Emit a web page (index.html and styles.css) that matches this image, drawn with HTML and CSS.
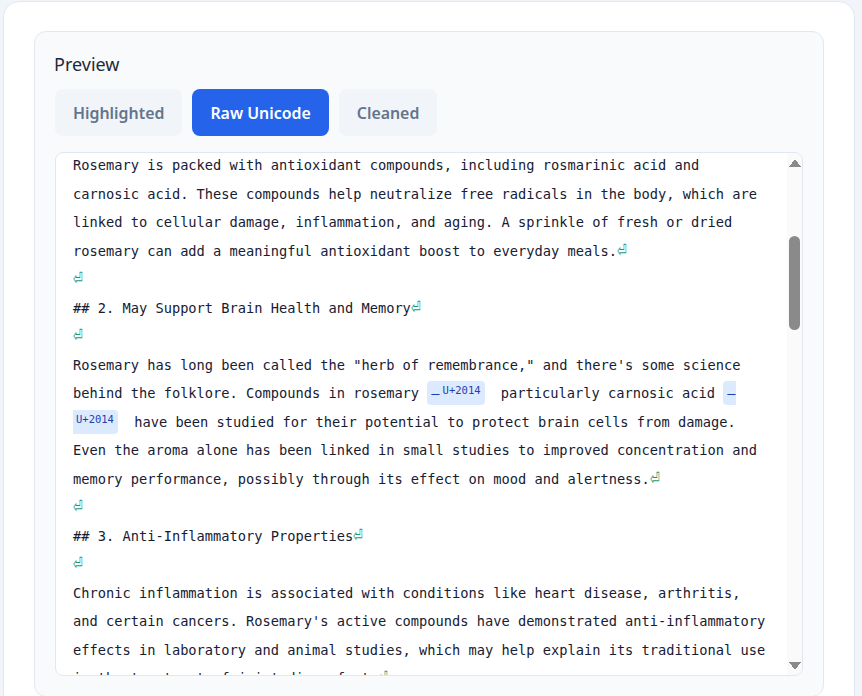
FILE: index.html
```html
<!DOCTYPE html>
<html lang="en">
<head>
<meta charset="utf-8">
<title>Preview</title>
<link rel="stylesheet" href="styles.css">
</head>
<body>
<div class="card">
  <section class="panel">
    <h2 class="panel-title">Preview</h2>
    <div class="tabs">
      <button class="tab">Highlighted</button>
      <button class="tab active">Raw Unicode</button>
      <button class="tab">Cleaned</button>
    </div>
    <div class="raw-wrap">
    <div class="raw" id="raw">
<div class="ln"># 7 Science-Backed Health Benefits of Rosemary<span class="nl">⏎</span></div>
<div class="ln"><span class="nl">⏎</span></div>
<div class="ln">Rosemary (Salvia rosmarinus) is a fragrant evergreen herb native to the Mediterranean region. Beyond its culinary uses, it has been valued for centuries in traditional medicine, and modern research is beginning to confirm many of its benefits.<span class="nl">⏎</span></div>
<div class="ln"><span class="nl">⏎</span></div>
<div class="ln">Whether you use it fresh, dried, or as an essential oil, rosemary offers a range of potential health benefits backed by a growing body of research.<span class="nl">⏎</span></div>
<div class="ln"><span class="nl">⏎</span></div>
<div class="ln">Here's a closer look at what the science says about this remarkable herb.<span class="nl">⏎</span></div>
<div class="ln"><span class="nl">⏎</span></div>
<div class="ln">## 1. Rich in Antioxidants<span class="nl">⏎</span></div>
<div class="ln"><span class="nl">⏎</span></div>
<div class="ln" id="mark">Rosemary is packed with antioxidant compounds, including rosmarinic acid and carnosic acid. These compounds help neutralize free radicals in the body, which are linked to cellular damage, inflammation, and aging. A sprinkle of fresh or dried rosemary can add a meaningful antioxidant boost to everyday meals.<span class="nl">⏎</span></div>
<div class="ln"><span class="nl">⏎</span></div>
<div class="ln">## 2. May Support Brain Health and Memory<span class="nl">⏎</span></div>
<div class="ln"><span class="nl">⏎</span></div>
<div class="ln">Rosemary has long been called the "herb of remembrance," and there's some science behind the folklore. Compounds in rosemary <span class="ch"><span class="ch-glyph">—</span><sup class="ch-code">U+2014</sup></span> particularly carnosic acid <span class="ch"><span class="ch-glyph">—</span><sup class="ch-code">U+2014</sup></span> have been studied for their potential to protect brain cells from damage. Even the aroma alone has been linked in small studies to improved concentration and memory performance, possibly through its effect on mood and alertness.<span class="nl">⏎</span></div>
<div class="ln"><span class="nl">⏎</span></div>
<div class="ln">## 3. Anti-Inflammatory Properties<span class="nl">⏎</span></div>
<div class="ln"><span class="nl">⏎</span></div>
<div class="ln">Chronic inflammation is associated with conditions like heart disease, arthritis, and certain cancers. Rosemary's active compounds have demonstrated anti-inflammatory effects in laboratory and animal studies, which may help explain its traditional use in the treatment of joint discomfort.<span class="nl">⏎</span></div>
<div class="ln"><span class="nl">⏎</span></div>
<div class="ln">## 4. May Aid Digestion<span class="nl">⏎</span></div>
<div class="ln"><span class="nl">⏎</span></div>
<div class="ln">In traditional herbal medicine, rosemary has been used to relieve indigestion, bloating, and mild stomach upset. Some research suggests that rosemary extract may support healthy gut bacteria and stimulate the production of bile, which plays an important role in breaking down dietary fats.<span class="nl">⏎</span></div>
<div class="ln"><span class="nl">⏎</span></div>
<div class="ln">## 5. Could Promote Hair Growth<span class="nl">⏎</span></div>
<div class="ln"><span class="nl">⏎</span></div>
<div class="ln">Rosemary oil has become a popular natural remedy for thinning hair. One small study found that rosemary oil applied to the scalp performed comparably to a common hair-loss treatment after six months, with less scalp itching reported. More research is needed, but early results are promising.<span class="nl">⏎</span></div>
<div class="ln"><span class="nl">⏎</span></div>
<div class="ln">## 6. May Help Regulate Blood Sugar<span class="nl">⏎</span></div>
<div class="ln"><span class="nl">⏎</span></div>
<div class="ln">Animal and test-tube studies indicate that compounds in rosemary may help improve insulin sensitivity and lower blood sugar levels. While human studies are limited, these findings suggest rosemary could be a helpful addition to a balanced diet for people managing blood sugar.<span class="nl">⏎</span></div>
<div class="ln"><span class="nl">⏎</span></div>
<div class="ln">## 7. Supports Mood and Stress Relief<span class="nl">⏎</span></div>
<div class="ln"><span class="nl">⏎</span></div>
<div class="ln">Inhaling rosemary essential oil has been associated with lower levels of cortisol, the body's primary stress hormone. Many people find its fresh, woody aroma uplifting, which is one reason it is often used in aromatherapy blends designed to ease tension and fatigue.<span class="nl">⏎</span></div>
<div class="ln"><span class="nl">⏎</span></div>
<div class="ln">## Safety and Precautions<span class="nl">⏎</span></div>
<div class="ln"><span class="nl">⏎</span></div>
<div class="ln">Rosemary is considered safe when used in typical culinary amounts. However, large doses of rosemary extract or essential oil may cause side effects such as vomiting or skin irritation. Talk to a healthcare provider before using concentrated rosemary supplements.<span class="nl">⏎</span></div>
<div class="ln"><span class="nl">⏎</span></div>
<div class="ln">## The Bottom Line<span class="nl">⏎</span></div>
<div class="ln"><span class="nl">⏎</span></div>
<div class="ln">Rosemary is far more than a flavorful kitchen herb. From its rich supply of antioxidants to its potential benefits for memory, digestion, hair, and mood, this humble plant has a lot to offer.<span class="nl">⏎</span></div>
    </div>
    <div class="scrollbar" aria-hidden="true">
      <span class="sb-btn sb-up"></span>
      <span class="sb-track"><span class="sb-thumb"></span></span>
      <span class="sb-btn sb-down"></span>
    </div>
    </div>
  </section>
</div>
<script src="script.js"></script>
</body>
</html>
```

FILE: styles.css
```css
* { box-sizing: border-box; }

html, body {
  margin: 0;
  padding: 0;
  background: #f1f5f9;
  font-family: "Noto Sans", "Open Sans", sans-serif;
  color: #1e293b;
}

body {
  height: 696px;
  overflow: hidden;
}

.card {
  margin: 1px 7px 0 3px;
  padding: 29px 30px 30px;
  background: #ffffff;
  border: 1px solid #e2e8f0;
  border-radius: 16px;
}

.panel {
  padding: 20px;
  background: #f8fafc;
  border: 1px solid #e2e8f0;
  border-radius: 12px;
}

.panel-title {
  margin: 0 0 13px -1px;
  font-size: 18px;
  line-height: 24px;
  font-weight: 400;
  color: #1e293b;
}

.tabs {
  display: flex;
  gap: 10px;
  margin-bottom: 16px;
}

.tab {
  padding: 13px 18px 11px;
  border: 0;
  border-radius: 8px;
  background: #f1f5f9;
  color: #64748b;
  font-family: "Noto Sans", "Open Sans", sans-serif;
  font-size: 15.9px;
  line-height: 23px;
  font-weight: 600;
}

.tab.active {
  background: #2563eb;
  color: #ffffff;
}

.raw-wrap {
  position: relative;
}

.raw {
  height: 524px;
  padding: 16px 32px 16px 17px;
  background: #ffffff;
  border: 1px solid #e2e8f0;
  border-radius: 8px;
  overflow: hidden;
  font-family: "DejaVu Sans Mono", "Liberation Mono", monospace;
  font-size: 13.7px;
  line-height: 28.5px;
  color: #172033;
}

.ln {
  white-space: pre-wrap;
  overflow-wrap: break-word;
}

.nl {
  display: inline-block;
  font-family: "DejaVu Sans", sans-serif;
  font-size: 17px;
  line-height: 1;
  color: #1a9873;
  transform: translateY(1px) scale(0.7, 1.08);
  transform-origin: 0 80%;
}

.ch {
  padding: 4px 4px;
  margin-right: 8px;
  background: #dbeafe;
  border-radius: 4px;
  color: #1e40af;
}

.ch-code {
  margin-left: 3px;
  font-size: 10.5px;
  line-height: 1;
  vertical-align: 4px;
  color: #1e40af;
}

/* drawn scrollbar overlaying the right edge of the text box */
.scrollbar {
  position: absolute;
  top: 1px;
  right: 1px;
  bottom: 1px;
  width: 15px;
  display: flex;
  flex-direction: column;
  background: #fafafa;
  border-radius: 0 7px 7px 0;
}

.sb-btn {
  display: block;
  height: 17px;
  flex: none;
  background-repeat: no-repeat;
  background-size: 6px 8px, 6px 8px;
}

.sb-up {
  background-image:
    linear-gradient(to top left, #8a8a8a 50%, transparent 50%),
    linear-gradient(to top right, #8a8a8a 50%, transparent 50%);
  background-position: 1.5px 6px, 7.5px 6px;
}

.sb-down {
  background-image:
    linear-gradient(to bottom left, #8a8a8a 50%, transparent 50%),
    linear-gradient(to bottom right, #8a8a8a 50%, transparent 50%);
  background-position: 1.5px 4px, 7.5px 4px;
}

.sb-track {
  display: block;
  flex: 1;
}

.sb-thumb {
  display: block;
  height: 94px;
  margin: 66px 2px 0;
  background: #8a8a8a;
  border-radius: 6px;
}
```

FILE: script.js
```js
var box = document.getElementById('raw');
var mark = document.getElementById('mark');
box.scrollTop = mark.getBoundingClientRect().top - box.getBoundingClientRect().top + 1;
```
